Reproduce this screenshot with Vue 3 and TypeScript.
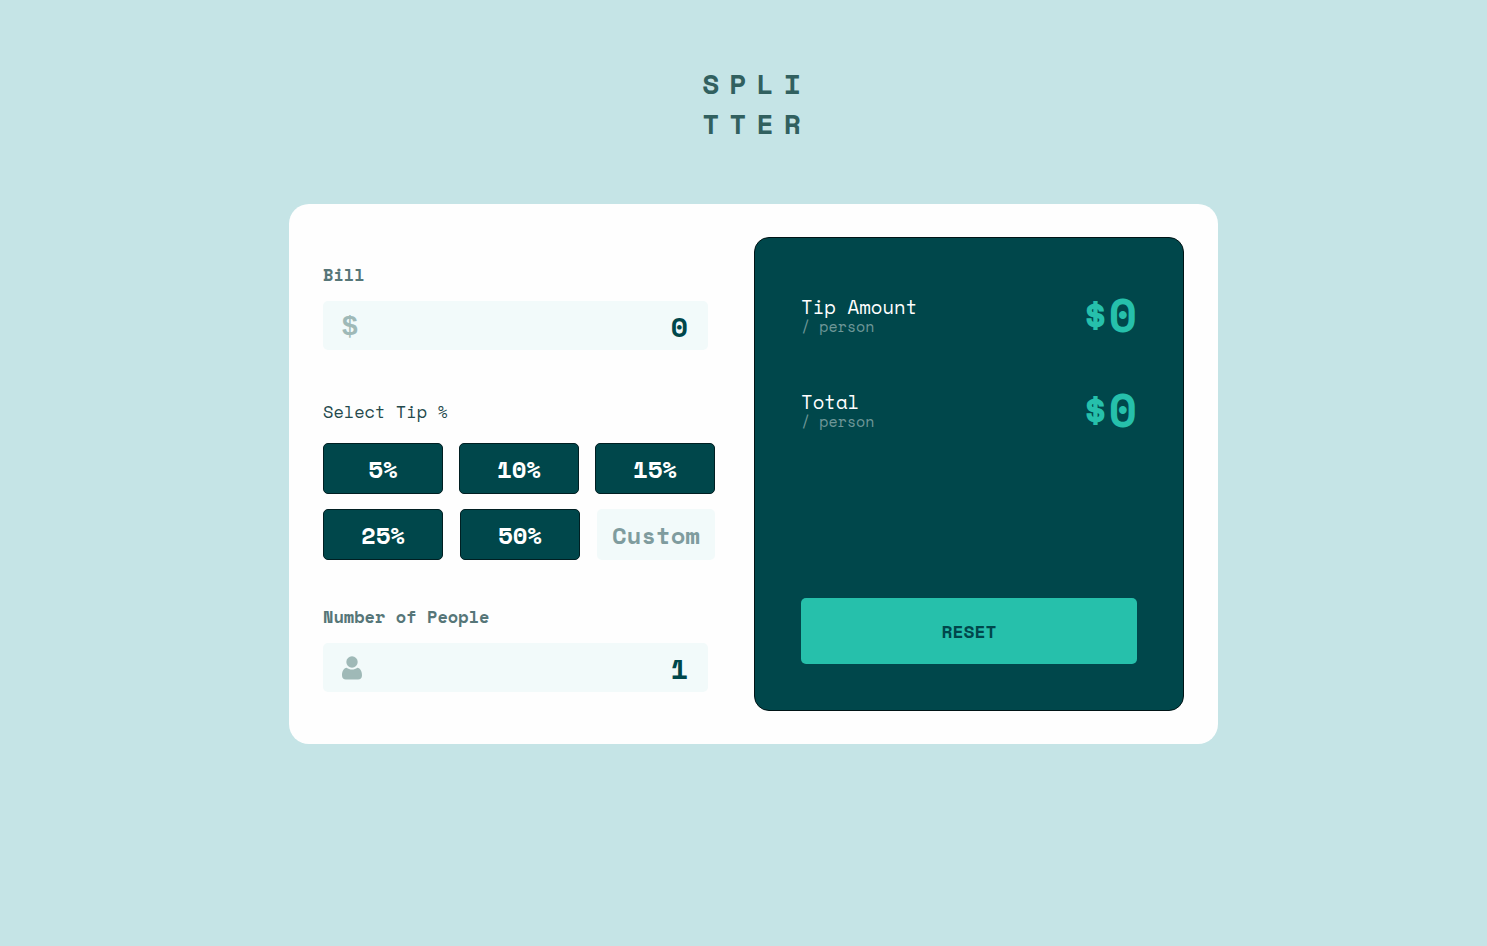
<script setup lang="ts">
import { computed, ref } from 'vue'

const bill = ref('0')
const people = ref('1')
const tip = ref(0)
const custom = ref('')

const topTips: number[] = [5, 10, 15]
const bottomTips: number[] = [25, 50]

const rate = computed(() => (custom.value ? Number(custom.value) || 0 : tip.value))
const heads = computed(() => Math.max(1, Number(people.value) || 1))
const amount = computed(() => Number(bill.value) || 0)
const tipEach = computed(() => (amount.value * rate.value) / 100 / heads.value)
const totalEach = computed(() => (rate.value ? amount.value / heads.value + tipEach.value : 0))

function money(value: number): string {
  return value === 0 ? '0' : value.toFixed(2)
}

function pick(value: number): void {
  tip.value = value
  custom.value = ''
}

function reset(): void {
  bill.value = '0'
  people.value = '1'
  tip.value = 0
  custom.value = ''
}
</script>

<template>
  <main class="page">
    <h1 class="logo">SPLI<br />TTER</h1>
    <div class="card">
      <form class="form" @submit.prevent>
        <label class="label" for="bill">Bill</label>
        <div class="field">
          <span class="dollar" aria-hidden="true">$</span>
          <input id="bill" v-model="bill" class="value" type="text" inputmode="decimal" />
        </div>

        <fieldset class="tips">
          <legend class="label">Select Tip %</legend>
          <div class="tip-row">
            <button v-for="t in topTips" :key="t" type="button" class="tip" @click="pick(t)">{{ t }}%</button>
          </div>
          <div class="tip-row">
            <button v-for="t in bottomTips" :key="t" type="button" class="tip" @click="pick(t)">{{ t }}%</button>
            <input v-model="custom" class="custom" type="text" inputmode="decimal" placeholder="Custom" aria-label="Custom tip percentage" />
          </div>
        </fieldset>

        <label class="label" for="people">Number of People</label>
        <div class="field">
          <svg class="person" viewBox="0 0 20 24" aria-hidden="true">
            <circle cx="10" cy="6" r="5.7" />
            <path d="M4.600 11.800C6.200 13 8 13.600 10 13.600s3.800-.6 5.400-1.800C18.300 12.200 20 15.300 20 19.200c0 2.900-1.600 4.400-4 4.400H4c-2.400 0-4-1.500-4-4.400 0-3.900 1.700-7 4.600-7.400z" />
          </svg>
          <input id="people" v-model="people" class="value" type="text" inputmode="numeric" />
        </div>
      </form>

      <section class="panel">
        <div class="result">
          <p class="name">Tip Amount<small class="per">/ person</small></p>
          <output class="sum"><span class="sign">$</span>{{ money(tipEach) }}</output>
        </div>
        <div class="result">
          <p class="name">Total<small class="per">/ person</small></p>
          <output class="sum"><span class="sign">$</span>{{ money(totalEach) }}</output>
        </div>
        <button type="button" class="reset" @click="reset">RESET</button>
      </section>
    </div>
  </main>
</template>

<style>
body {
  margin: 0;
  background: #c5e4e6;
}
</style>

<style scoped>
.page,
.page * {
  box-sizing: border-box;
  font-family: "Space Mono", "Liberation Mono", monospace;
}

.page {
  display: flex;
  flex-direction: column;
  align-items: center;
  min-height: 100vh;
  padding: 64px 0 40px 20px;
}

.logo {
  margin: 0 0 60px;
  padding-left: 6px;
  font-size: 28px;
  line-height: 40px;
  font-weight: 700;
  letter-spacing: 10px;
  color: #31605f;
}

.card {
  display: grid;
  grid-template-columns: minmax(0, 392fr) minmax(0, 430fr);
  gap: 39px;
  width: 100%;
  max-width: 929px;
  padding: 33px 34px;
  border-radius: 20px;
  background: #fefefe;
}

.form {
  padding: 26px 0 19px;
}

.label {
  display: block;
  padding: 0;
  font-size: 17px;
  line-height: 24px;
  font-weight: 700;
  color: #567678;
}

.field {
  display: flex;
  align-items: center;
  height: 49px;
  margin: 14px 7px 0 0;
  padding: 0 20px 0 19px;
  border-radius: 5px;
  background: #f2fafa;
}

.page .dollar {
  font-family: "Liberation Sans", Arial, sans-serif;
  font-size: 28px;
  line-height: 28px;
  font-weight: 700;
  color: #9fb9b7;
}

.person {
  flex: none;
  width: 20px;
  height: 24px;
  fill: #9fb9b7;
}

.value {
  flex: 1;
  min-width: 0;
  padding: 2px 0 0;
  border: 0;
  background: none;
  font-size: 28px;
  font-weight: 700;
  text-align: right;
  color: #00474b;
  outline: none;
}

.tips {
  display: flex;
  flex-direction: column;
  gap: 15px;
  min-width: 0;
  margin: 50px 0 45px;
  padding: 0;
  border: 0;
}

.tips .label {
  margin-bottom: 19px;
  font-weight: 400;
  color: #24494c;
}

.tip-row {
  display: flex;
  justify-content: space-between;
}

.tip,
.custom {
  width: 120px;
  height: 51px;
  padding: 0;
  border-radius: 5px;
  font-size: 24px;
  font-weight: 700;
  text-align: center;
}

.tip {
  border: 1px solid #001f22;
  background: #00474b;
  color: #ffffff;
  cursor: pointer;
}

.custom {
  width: 118px;
  border: 0;
  background: #f2fafa;
  color: #00474b;
  outline: none;
}

.custom::placeholder {
  color: #7f9c9e;
  opacity: 1;
}

.panel {
  display: flex;
  flex-direction: column;
  padding: 53px 46px 46px;
  border: 1px solid #001416;
  border-radius: 15px;
  background: #00474b;
}

.result {
  display: flex;
  justify-content: space-between;
  height: 48px;
  margin-bottom: 47px;
}

.name {
  margin: 6px 0 0;
  font-size: 19px;
  line-height: 20px;
  color: #ffffff;
}

.per {
  display: block;
  font-size: 15px;
  line-height: 18px;
  color: #6f9798;
}

.sum {
  display: flex;
  align-items: center;
  font-size: 46px;
  line-height: 46px;
  font-weight: 700;
  color: #26c0ab;
}

.sign {
  font-size: 44px;
}

.reset {
  height: 66px;
  margin-top: auto;
  padding: 0;
  border: 0;
  border-radius: 5px;
  background: #26c0ab;
  font-size: 18px;
  font-weight: 700;
  color: #00474b;
  cursor: pointer;
}
</style>
